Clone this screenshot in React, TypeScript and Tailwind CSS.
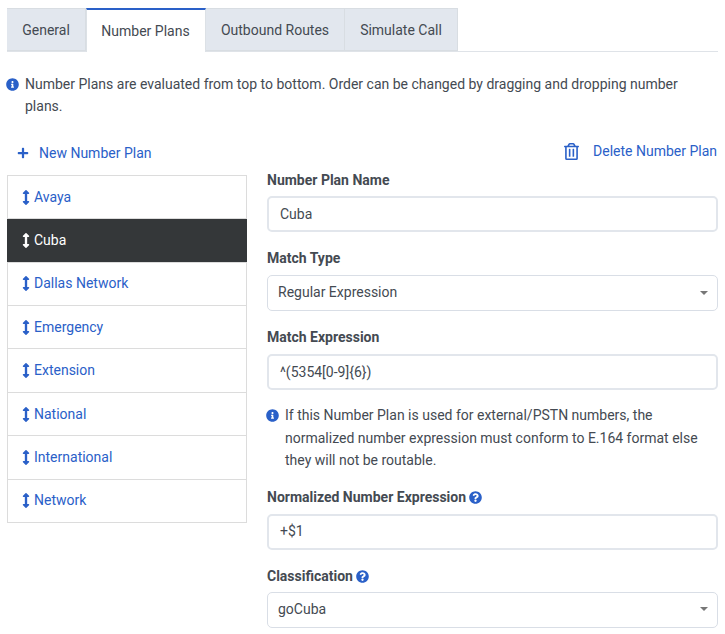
import { FaArrowsAltV, FaInfoCircle, FaPlus, FaQuestionCircle, FaRegTrashAlt } from "react-icons/fa";

const tabs = ["General", "Number Plans", "Outbound Routes", "Simulate Call"];
const plans = ["Avaya", "Cuba", "Dallas Network", "Emergency", "Extension", "National", "International", "Network"];

function Tabs() {
  return (
    <div className="flex h-[44px] border-b border-[#dfe3e8]">
      {tabs.map((t) =>
        t === "Number Plans" ? (
          <div key={t} className="h-[44px] w-[120px] pr-[1px] border-t-2 border-x border-t-[#2a60c8] border-x-[#dce1e6] bg-white flex items-center justify-center text-[#444a52]">
            {t}
          </div>
        ) : (
          <div
            key={t}
            className={`h-[43px] border border-[#d8dde2] border-l-0 bg-[#e2e7ee] flex items-center justify-center pt-[1px] text-[#444a52] ${
              t === "General" ? "w-[79px] border-l" : t === "Outbound Routes" ? "w-[139px]" : "w-[113px]"
            }`}
          >
            {t}
          </div>
        )
      )}
    </div>
  );
}

function Label({ text, help }: { text: string; help?: boolean }) {
  return (
    <div className="flex items-center gap-[3px] h-[20px] font-bold text-[#444a52]">
      {text}
      {help && <FaQuestionCircle className="text-[#2a60c8] w-[13px] h-[13px]" />}
    </div>
  );
}

function TextBox({ value, tight }: { value: string; tight?: boolean }) {
  return (
    <div className={`${tight ? "mt-[6px]" : "mt-[7px]"} h-[36px] rounded-[5px] border-2 border-[#e2e6ec] bg-white pl-[11px] flex items-center text-[#444a52]`}>
      {value}
    </div>
  );
}

function SelectBox({ value, tight }: { value: string; tight?: boolean }) {
  return (
    <div className={`${tight ? "mt-[5px]" : "mt-[7px]"} h-[36px] rounded-[5px] border border-[#d9dee6] bg-white pl-[10px] pr-[9px] pb-[1px] flex items-center justify-between text-[#444a52]`}>
      {value}
      <span className="w-0 h-0 border-x-[4px] border-x-transparent border-t-[4px] border-t-[#777]" />
    </div>
  );
}

export default function App() {
  return (
    <div className="w-[725px] h-[634px] overflow-hidden bg-white pt-[8px] pl-[7px] pr-[7px] text-[14px] font-['Roboto',sans-serif]">
      <Tabs />

      <div className="mt-[21px] flex text-[#444a52] leading-[22px]">
        <FaInfoCircle className="text-[#2a60c8] w-[13px] h-[13px] mt-[5px] -ml-[1px] shrink-0" />
        <p className="ml-[6px] w-[680px]">
          Number Plans are evaluated from top to bottom. Order can be changed by dragging and dropping number plans.
        </p>
      </div>

      <div className="mt-[23px] flex gap-[20px]">
        <div className="w-[240px]">
          <div className="h-[26px] pl-[10px] flex items-center text-[#2a60c8]">
            <FaPlus className="w-[12px] h-[12px]" />
            <span className="ml-[10px]">New Number Plan</span>
          </div>
          <div className="mt-[9px] border border-[#dcdcdc] border-b-0">
            {plans.map((p) => (
              <div
                key={p}
                className={`h-[43.36px] pl-[14px] flex items-center border-b border-[#dcdcdc] ${
                  p === "Cuba" ? "bg-[#343739] text-white -mx-[1px] pl-[15px] border-[#343739]" : "text-[#2a60c8]"
                } ${p === "National" ? "pt-[1px]" : ""}`}
              >
                <FaArrowsAltV className="w-[8px] h-[15px]" />
                <span className="ml-[4px]">{p}</span>
              </div>
            ))}
          </div>
        </div>

        <div className="w-[451px]">
          <div className="h-[22px] mb-[8px] flex items-center justify-end text-[#2a60c8]">
            <FaRegTrashAlt className="w-[15px] h-[17px]" />
            <span className="ml-[14px] mr-[1px]">Delete Number Plan</span>
          </div>
          <Label text="Number Plan Name" />
          <TextBox value="Cuba" tight />
          <div className="mt-[16px]">
            <Label text="Match Type" />
            <SelectBox value="Regular Expression" />
          </div>
          <div className="mt-[16px]">
            <Label text="Match Expression" />
            <TextBox value="^(5354[0-9]{6})" />
          </div>
          <div className="mt-[14px] flex leading-[22.5px] text-[#444a52]">
            <FaInfoCircle className="text-[#2a60c8] w-[13px] h-[13px] mt-[5px] -ml-[1px] shrink-0" />
            <p className="ml-[6px]">
              If this Number Plan is used for external/PSTN numbers, the normalized number expression must conform to
              E.164 format else they will not be routable.
            </p>
          </div>
          <div className="mt-[16px]">
            <Label text="Normalized Number Expression" help />
            <TextBox value="+$1" tight />
          </div>
          <div className="mt-[17px]">
            <Label text="Classification" help />
            <SelectBox value="goCuba" tight />
          </div>
        </div>
      </div>
    </div>
  );
}
